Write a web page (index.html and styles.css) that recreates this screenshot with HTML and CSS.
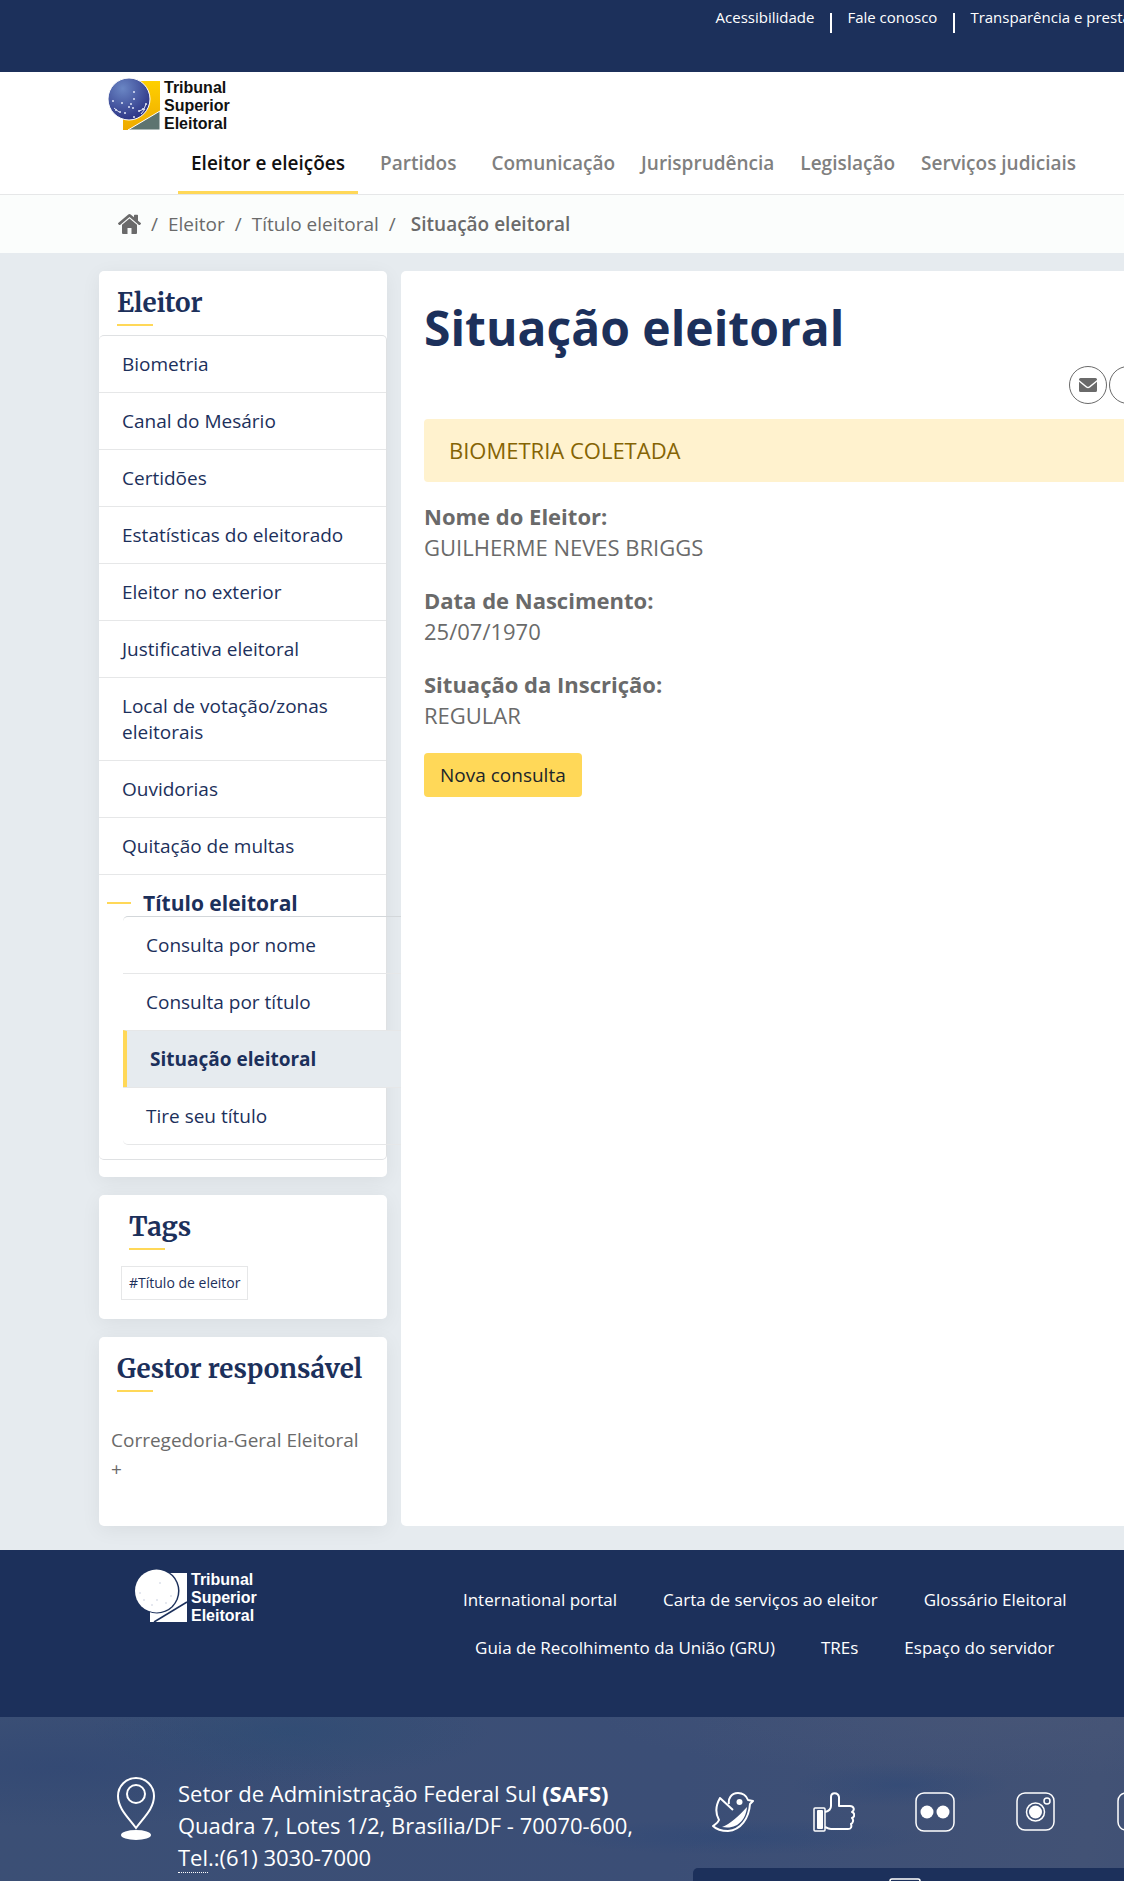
FILE: index.html
```html
<!DOCTYPE html>
<html lang="pt-BR">
<head>
<meta charset="UTF-8">
<meta name="viewport" content="width=device-width, initial-scale=1.0">
<title>Situação eleitoral — Tribunal Superior Eleitoral</title>
<link rel="stylesheet" href="styles.css">
</head>
<body>
<div class="page">

    <div class="topbar">
        <ul class="topbar-links">
            <li><a href="#">Acessibilidade</a></li>
            <li><a href="#">Fale conosco</a></li>
            <li><a href="#">Transparência e prestação de contas</a></li>
        </ul>
    </div>

    <header class="header">
        <a class="logo" href="#" aria-label="Tribunal Superior Eleitoral">
            <svg width="52" height="54" viewBox="0 0 52 54">
                <defs>
                    <radialGradient id="globe" cx="35%" cy="25%" r="80%">
                        <stop offset="0" stop-color="#6a86c4"/>
                        <stop offset="1" stop-color="#2a3183"/>
                    </radialGradient>
                    <linearGradient id="gold" x1="0" y1="0" x2="0" y2="1">
                        <stop offset="0" stop-color="#ffd000"/>
                        <stop offset="1" stop-color="#eeaa00"/>
                    </linearGradient>
                </defs>
                <path d="M15 4h37v49H15z" fill="url(#gold)"/>
                <path d="M52 34v19H20z" fill="#5d7470" stroke="#fff"/>
                <circle cx="21" cy="22" r="21" fill="url(#globe)" stroke="#fff"/>
                <g fill="#dfe5f7">
                    <circle cx="26" cy="15" r="1"/><circle cx="26" cy="22" r="1"/><circle cx="14" cy="26" r="1"/>
                    <circle cx="5" cy="24" r="1"/><circle cx="8" cy="33" r="1"/><circle cx="12" cy="35" r="1"/>
                    <circle cx="17" cy="36" r="1"/><circle cx="23" cy="27" r="1"/><circle cx="25" cy="31" r="1"/>
                    <circle cx="21" cy="30" r="1"/><circle cx="31" cy="34" r="1"/><circle cx="35" cy="32" r="1"/>
                    <circle cx="38" cy="27" r="1"/><circle cx="26" cy="40" r="1"/>
                </g>
                <path d="M6 31l5 4M31 34l5-2 2-5M33 37l4-5" stroke="#dfe5f7" fill="none"/>
            </svg>
            <span class="logo-text">Tribunal<br>Superior<br>Eleitoral</span>
        </a>
        <nav class="main-nav">
            <a class="active" href="#">Eleitor e eleições</a>
            <a class="spaced" href="#">Partidos</a>
            <a class="spaced" href="#">Comunicação</a>
            <a href="#">Jurisprudência</a>
            <a href="#">Legislação</a>
            <a href="#">Serviços judiciais</a>
        </nav>
    </header>

    <nav class="breadcrumb" aria-label="Você está aqui">
        <a class="home" href="#" aria-label="Página inicial">
            <svg width="23" height="20" viewBox="0 0 23 20" fill="#6a6a6a">
                <path d="M11.500 4.500l7.500 6.300V19q0 1-1 1h-4.500v-6h-4v6H5q-1 0-1-1v-8.200z"/>
                <path d="M10.300.6q1.200-1 2.400 0L16 3.300V1.500q0-.7.700-.7h2.600q.7 0 .7.700v5.200l2.800 2.300q.4.400 0 .9l-.9 1q-.5.400-1 0L11.500 3 2.100 10.900q-.5.400-1 0l-.9-1q-.4-.5 0-.9z"/>
            </svg>
        </a>
        <span class="sep">/</span>
        <a href="#">Eleitor</a>
        <span class="sep">/</span>
        <a href="#">Título eleitoral</a>
        <span class="sep">/</span>
        <strong>Situação eleitoral</strong>
    </nav>

    <div class="content">
        <aside class="sidebar">
            <section class="card card-menu">
                <h2>Eleitor</h2>
                <ul class="menu">
                    <li><a href="#">Biometria</a></li>
                    <li><a href="#">Canal do Mesário</a></li>
                    <li><a href="#">Certidões</a></li>
                    <li><a href="#">Estatísticas do eleitorado</a></li>
                    <li><a href="#">Eleitor no exterior</a></li>
                    <li><a href="#">Justificativa eleitoral</a></li>
                    <li><a href="#">Local de votação/zonas eleitorais</a></li>
                    <li><a href="#">Ouvidorias</a></li>
                    <li><a href="#">Quitação de multas</a></li>
                    <li class="open">
                        <a href="#">Título eleitoral</a>
                        <ul class="submenu">
                            <li><a href="#">Consulta por nome</a></li>
                            <li><a href="#">Consulta por título</a></li>
                            <li class="current"><a href="#">Situação eleitoral</a></li>
                            <li><a href="#">Tire seu título</a></li>
                        </ul>
                    </li>
                </ul>
            </section>

            <section class="card card-tags">
                <h2>Tags</h2>
                <a class="tag" href="#">#Título de eleitor</a>
            </section>

            <section class="card card-owner">
                <h2>Gestor responsável</h2>
                <a href="#">Corregedoria-Geral Eleitoral +</a>
            </section>
        </aside>

        <main class="main">
            <h1>Situação eleitoral</h1>
            <div class="share">
                <button type="button" aria-label="Enviar por e-mail">
                    <svg width="18" height="14" viewBox="0 0 18 14" fill="#6a6a6a">
                        <path d="M1.500 0h15Q18 0 18 1.500v.6L10.300 8.200Q9 9.200 7.700 8.200L0 2.100v-.6Q0 0 1.500 0z"/>
                        <path d="M0 3.800l7 5.600q2 1.500 4 0l7-5.600v8.700q0 1.500-1.500 1.500h-15Q0 14 0 12.500z"/>
                    </svg>
                </button>
                <button type="button" aria-label="Compartilhar"></button>
                <button type="button" aria-label="Imprimir"></button>
                <button type="button" aria-label="Copiar link"></button>
            </div>
            <div class="alert">BIOMETRIA COLETADA</div>
            <p><strong>Nome do Eleitor:</strong><br>GUILHERME NEVES BRIGGS</p>
            <p><strong>Data de Nascimento:</strong><br>25/07/1970</p>
            <p><strong>Situação da Inscrição:</strong><br>REGULAR</p>
            <button class="btn" type="button">Nova consulta</button>
        </main>
    </div>

    <footer>
        <div class="footer-top">
            <a class="logo logo-white" href="#" aria-label="Tribunal Superior Eleitoral">
                <svg width="52" height="54" viewBox="0 0 52 54">
                    <path d="M15 4h37v49H15z" fill="#fff"/>
                    <path d="M52 33L19 53" stroke="#1c305b" stroke-width="1.500"/>
                    <circle cx="22" cy="22" r="22.500" fill="#1c305b"/>
                    <circle cx="21.500" cy="22" r="21.500" fill="#fff"/>
                    <g fill="#dde1ea">
                        <circle cx="25" cy="14" r="1"/><circle cx="5" cy="24" r="1"/><circle cx="9" cy="31" r="1"/>
                        <circle cx="22" cy="31" r="1"/><circle cx="36" cy="27" r="1"/><circle cx="31" cy="34" r="1"/>
                        <circle cx="17" cy="36" r="1"/>
                    </g>
                </svg>
                <span class="logo-text">Tribunal<br>Superior<br>Eleitoral</span>
            </a>
            <ul class="footer-links">
                <li><a href="#">International portal</a></li>
                <li><a href="#">Carta de serviços ao eleitor</a></li>
                <li><a href="#">Glossário Eleitoral</a></li>
                <li><a href="#">Guia de Recolhimento da União (GRU)</a></li>
                <li><a href="#">TREs</a></li>
                <li><a href="#">Espaço do servidor</a></li>
            </ul>
        </div>

        <div class="footer-bottom">
            <div class="address">
                <svg width="38" height="64" viewBox="0 0 38 64" fill="none" stroke="#fff" stroke-width="2">
                    <path d="M19 51C12 41 1 32 1 19a18 18 0 0 1 36 0c0 13-11 22-18 32z"/>
                    <circle cx="19" cy="17" r="9"/>
                    <ellipse cx="19" cy="58" rx="15" ry="5" fill="#fff" stroke="none"/>
                </svg>
                <p>Setor de Administração Federal Sul <strong>(SAFS)</strong><br>
                Quadra 7, Lotes 1/2, Brasília/DF - 70070-600,<br>
                <abbr title="Telefone">Tel</abbr>.:(61) 3030-7000</p>
            </div>
            <div class="contact">
                <div class="social">
                    <a href="#" aria-label="Twitter">
                        <svg width="42" height="40" viewBox="0 0 42 40" fill="none" stroke="#fff" stroke-width="2" stroke-linejoin="round">
                            <path d="M21 18L8 6C4 13 3 21 7 28c-1 3-3 4-6 6 4 4 9 5 15 5 13-1 21-13 22-27l3-3-5-1c-2-5-6-7-10-7-7 0-10 6-9 11"/>
                            <circle cx="27.500" cy="10" r="3" fill="#fff" stroke="none"/>
                            <path d="M35 15C34 27 26 38 10 35c8-3 17-11 25-20z" fill="#fff" stroke="none"/>
                        </svg>
                    </a>
                    <a href="#" aria-label="Facebook">
                        <svg width="42" height="40" viewBox="0 0 42 40" fill="none" stroke="#fff" stroke-width="2" stroke-linejoin="round">
                            <rect x="1" y="16" width="11" height="23" rx="1" stroke-width="1.500"/>
                            <rect x="4" y="18" width="6" height="19" rx="1" fill="#fff" stroke="none"/>
                            <path d="M12 20c4-1 6-3 6-6V5c0-5 7-5 8 0v9h11c4 0 5 4 2 6 3 1 3 5 0 6 2 2 1 5-1 6 1 3 0 5-3 5H18c-2 0-4-1-6-2"/>
                        </svg>
                    </a>
                    <a href="#" aria-label="Flickr">
                        <svg width="42" height="40" viewBox="0 0 42 40" fill="none" stroke="#fff">
                            <rect x="2" y="1" width="38" height="38" rx="8" stroke-width="1.500"/>
                            <circle cx="13" cy="20" r="6.500" fill="#fff" stroke="none"/>
                            <circle cx="29" cy="20" r="6.500" fill="#fff" stroke="none"/>
                        </svg>
                    </a>
                    <a href="#" aria-label="Instagram">
                        <svg width="42" height="40" viewBox="0 0 42 40" fill="none" stroke="#fff" stroke-width="1.500">
                            <rect x="2" y="1" width="37" height="37" rx="8"/>
                            <circle cx="20.500" cy="20" r="9"/>
                            <circle cx="20.500" cy="20" r="6.500" fill="#fff" stroke="none"/>
                            <circle cx="32" cy="9" r="3"/>
                        </svg>
                    </a>
                    <a href="#" aria-label="YouTube">
                        <svg width="42" height="40" viewBox="0 0 42 40" fill="none" stroke="#fff" stroke-width="1.500">
                            <rect x="2" y="1" width="37" height="37" rx="8"/>
                            <path d="M15 12l13 8-13 8z" fill="#fff"/>
                        </svg>
                    </a>
                </div>
                <div class="apps">
                    <svg width="32" height="40" viewBox="0 0 32 40" fill="none" stroke="#fff" stroke-width="1.500">
                        <rect x="1" y="1" width="30" height="38" rx="2"/>
                    </svg>
                </div>
            </div>
        </div>
    </footer>

</div>
</body>
</html>
```

FILE: styles.css
```css
:root {
    --navy: #1c305b;
    --yellow: #ffd858;
    --bg: #e6ebef;
    --gray: #6a6a6a;
    --line: #e6e7e8;
    --edge: 99px;
}

* {
    box-sizing: border-box;
}

body {
    margin: 0;
    height: 100vh;
    overflow: hidden;
    font-family: "Open Sans", sans-serif;
    font-size: 19px;
    line-height: 26px;
    color: var(--gray);
    background: var(--bg);
}

.page {
    min-width: 1349px;
}

a {
    color: inherit;
    text-decoration: none;
}

ul {
    list-style: none;
    margin: 0;
    padding: 0;
}

/* Top bar */
.topbar {
    display: flex;
    height: 72px;
    padding: 7px 122px 0;
    background: var(--navy);
    color: #fff;
    font-size: 15px;
    line-height: 20px;
}

.topbar-links {
    display: flex;
    margin-left: auto;
}

.topbar-links li {
    display: flex;
    align-items: flex-start;
}

.topbar-links li + li::before {
    content: "";
    width: 2px;
    height: 20px;
    margin: 6px 15px 0 16px;
    background: #fff;
}

/* Header */
.header {
    display: flex;
    flex-direction: column;
    background: #fff;
    border-bottom: 1px solid var(--line);
}

.logo {
    display: flex;
    align-items: flex-start;
    gap: 4px;
    margin: 5px 0 0 108px;
    color: #111;
}

.logo-text {
    padding-top: 2px;
    font: bold 16px/18px "Liberation Sans", Arial, sans-serif;
}

.main-nav {
    display: flex;
    padding: 0 178px;
    font-weight: 600;
    color: #808080;
}

.main-nav a {
    padding: 17px 13px 15px;
    border-bottom: 3px solid transparent;
}

.main-nav .active {
    color: #111;
    border-color: var(--yellow);
}

.main-nav .spaced {
    padding-left: 22px;
}

/* Breadcrumb */
.breadcrumb {
    display: flex;
    align-items: center;
    gap: 10px;
    height: 58px;
    padding: 0 118px;
    background: #fbfdfc;
}

.breadcrumb strong {
    margin-left: 5px;
    font-weight: 600;
}

.breadcrumb svg {
    display: block;
}

/* Columns */
.content {
    display: flex;
    gap: 14px;
    padding: 18px var(--edge) 24px;
}

.sidebar {
    display: flex;
    flex-direction: column;
    gap: 18px;
    width: 288px;
}

.card {
    background: #fff;
    border-radius: 5px;
    box-shadow: 0 4px 20px rgba(0, 0, 0, 0.06);
}

.card h2 {
    margin: 0;
    padding: 16px 18px 12px;
    font: bold 26px/32px Merriweather, "Liberation Serif", serif;
    color: var(--navy);
}

.card h2::after {
    content: "";
    display: block;
    width: 36px;
    height: 2px;
    margin-top: 5px;
    background: var(--yellow);
}

.card-menu {
    padding-bottom: 17px;
}

.menu {
    margin-top: -3px;
    border: 1px solid #dfe1e3;
    border-left: none;
    border-radius: 5px;
    color: var(--navy);
}

.menu a {
    display: block;
    padding: 15px 40px 15px 23px;
}

.menu > li + li,
.submenu li + li {
    border-top: 1px solid var(--line);
}

.open > a {
    display: flex;
    align-items: center;
    gap: 12px;
    padding: 15px 8px 0;
    font-size: 21px;
    font-weight: 700;
}

.open > a::before {
    content: "";
    width: 24px;
    height: 2px;
    background: var(--yellow);
}

/* the nested list runs out to the edge of the main column */
.submenu {
    margin: 0 -15px 14px 24px;
    border-top: 1px solid #d3d7da;
    border-bottom: 1px solid var(--line);
    border-radius: 5px 0 0 5px;
}

.submenu .current {
    background: var(--bg);
    border-left: 4px solid var(--yellow);
    font-weight: 700;
}

.card-tags {
    display: flex;
    flex-direction: column;
    align-items: flex-start;
    padding-bottom: 19px;
}

.card-tags h2 {
    padding: 16px 30px 16px;
}

.tag {
    margin-left: 22px;
    padding: 5px 7px;
    border: 1px solid var(--line);
    color: var(--navy);
    font-size: 14px;
    line-height: 22px;
}

.card-owner {
    padding-bottom: 42px;
}

.card-owner > a {
    display: block;
    padding: 22px 20px 0 12px;
    line-height: 29px;
}

/* Main column */
.main {
    flex: 1;
    padding: 24px 23px;
    background: #fff;
    border-radius: 5px;
    font-size: 22px;
    line-height: 31px;
}

.main h1 {
    margin: 0;
    font-size: 48px;
    line-height: 66px;
    color: var(--navy);
}

.share {
    display: flex;
    justify-content: flex-end;
    gap: 2px;
    margin: 5px 0 15px;
}

.share button {
    display: grid;
    place-items: center;
    width: 38px;
    height: 38px;
    padding: 0;
    background: none;
    border: 1px solid var(--gray);
    border-radius: 50%;
}

.alert {
    padding: 16px 25px;
    background: #fff2ce;
    border-radius: 4px;
    color: #856404;
}

.main p {
    margin: 0 0 22px;
}

.alert + p {
    margin-top: 19px;
}

.btn {
    padding: 9px 16px;
    border: none;
    border-radius: 4px;
    background: var(--yellow);
    color: #212529;
    font: inherit;
    font-size: 19px;
    line-height: 26px;
}

/* Footer */
.footer-top {
    display: flex;
    align-items: flex-start;
    min-height: 167px;
    background: var(--navy);
    color: #fff;
}

.logo-white {
    margin: 19px 0 0 135px;
    color: #fff;
}

.footer-links {
    display: flex;
    flex-wrap: wrap;
    justify-content: center;
    gap: 24px 46px;
    width: 660px;
    margin: 38px auto 0 178px;
    font-size: 17px;
    line-height: 24px;
}

.footer-bottom {
    display: flex;
    justify-content: space-between;
    padding: 60px 0 0 117px;
    color: #fff;
    background:
        radial-gradient(ellipse 190px 18px at 740px 120px, rgba(32, 66, 120, 0.3), transparent),
        radial-gradient(ellipse 110px 22px at 900px 68px, rgba(32, 66, 120, 0.3), transparent),
        radial-gradient(ellipse 200px 50px at 290px 15px, rgba(43, 75, 115, 0.6), transparent),
        radial-gradient(ellipse 300px 60px at 60px 50px, rgba(47, 70, 115, 0.6), transparent),
        radial-gradient(ellipse 400px 60px at 1000px 0, rgba(75, 88, 120, 0.5), transparent),
        linear-gradient(100deg, #3b4f75, #3b4e76 50%, #425275 80%, #394d76);
}

.address {
    display: flex;
    gap: 23px;
    align-items: flex-start;
}

.address p {
    margin: 0;
    font-size: 22px;
    line-height: 32px;
}

.address abbr {
    text-decoration: none;
    border-bottom: 1px dotted #fff;
}

.contact {
    width: 656px;
}

.social {
    display: flex;
    gap: 59px;
    padding: 15px 0 36px 19px;
}

.social svg {
    display: block;
}

.apps {
    padding: 10px 196px;
    background: var(--navy);
    border-radius: 5px 0 0;
}
```
